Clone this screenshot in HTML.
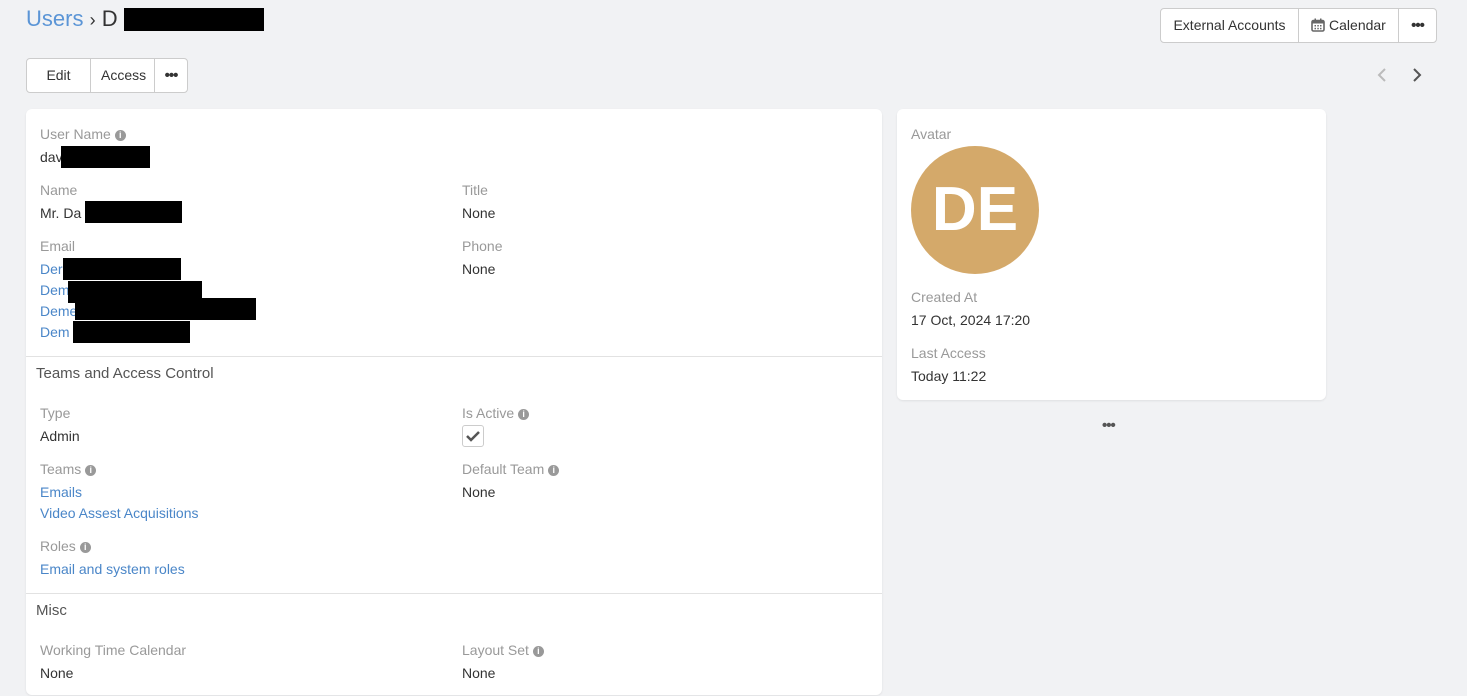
<!DOCTYPE html>
<html><head><style>
body{margin:0;width:1467px;height:696px;background:#f1f2f4;font-family:"Liberation Sans",sans-serif;font-size:14px;color:#333;position:relative;overflow:hidden}
.a{position:absolute;white-space:nowrap}
.l{color:#999}
.v{color:#333}
.k{color:#4a86c8}
.r{position:absolute;background:#000}
.i{display:inline-block;width:11px;height:11px;border-radius:50%;background:#999;color:#fff;font-size:9px;line-height:11px;text-align:center;font-weight:bold;vertical-align:1px;margin-left:4px}
.p{position:absolute;background:#fff;border-radius:6px;box-shadow:0 1px 2px rgba(0,0,0,.08)}
.bg{position:absolute;display:flex;border:1px solid #ccc;border-radius:4px;background:#fff;height:33px}
.bg div{border-right:1px solid #ccc;padding:0 10px;line-height:33px;color:#333;box-sizing:border-box;text-align:center}
.bg div:last-child{border-right:none}
.h{position:absolute;left:26px;width:856px;height:1px;background:#e2e2e2}
.d{font-size:15px;font-weight:bold;color:#555;letter-spacing:-1px}
</style></head><body>
<div class="a" style="left:26px;top:6px;font-size:22px"><span style="color:#5b95d6">Users</span> <span style="font-size:18px">›</span> D</div>
<div class="r" style="left:124px;top:8px;width:140px;height:23px"></div>
<div class="bg" style="left:1160px;top:8px"><div style="width:138px">External Accounts</div><div style="width:100px"><svg width="14" height="14" viewBox="0 0 14 14" style="vertical-align:-2px"><rect x="1" y="2.5" width="12" height="10.5" rx="1.5" fill="none" stroke="#666" stroke-width="1.6"/><rect x="1" y="2.5" width="12" height="3" fill="#666"/><rect x="3.5" y="0.5" width="1.5" height="3" fill="#666"/><rect x="9" y="0.5" width="1.5" height="3" fill="#666"/><g fill="#666"><rect x="3.5" y="7" width="1.5" height="1.5"/><rect x="6.3" y="7" width="1.5" height="1.5"/><rect x="9" y="7" width="1.5" height="1.5"/><rect x="3.5" y="9.8" width="1.5" height="1.5"/><rect x="6.3" y="9.8" width="1.5" height="1.5"/><rect x="9" y="9.8" width="1.5" height="1.5"/></g></svg> Calendar</div><div style="width:37px" class="d">•••</div></div>
<div class="bg" style="left:26px;top:58px"><div style="width:64px">Edit</div><div style="width:64px">Access</div><div style="width:32px;padding:0" class="d">•••</div></div>
<svg class="a" style="left:1377px;top:68px" width="10" height="14"><path d="M8 1L2 7l6 6" fill="none" stroke="#bbb" stroke-width="2"/></svg>
<svg class="a" style="left:1412px;top:68px" width="10" height="14"><path d="M2 1l6 6-6 6" fill="none" stroke="#555" stroke-width="2"/></svg>

<div class="p" style="left:26px;top:109px;width:856px;height:586px"></div>
<div class="h" style="top:356px"></div><div class="h" style="top:593px"></div>
<div class="a l" style="left:40px;top:126px">User Name<span class="i">i</span></div>
<div class="a v" style="left:40px;top:149px">dav</div><div class="r" style="left:61px;top:146px;width:89px;height:22px"></div>
<div class="a l" style="left:40px;top:182px">Name</div><div class="a v" style="left:40px;top:205px">Mr. Da</div><div class="r" style="left:85px;top:201px;width:97px;height:22px"></div>
<div class="a l" style="left:462px;top:182px">Title</div><div class="a v" style="left:462px;top:205px">None</div>
<div class="a l" style="left:40px;top:238px">Email</div>
<div class="a k" style="left:40px;top:261px">Der</div><div class="r" style="left:63px;top:258px;width:118px;height:22px"></div>
<div class="a k" style="left:40px;top:282px">Dem</div><div class="r" style="left:68px;top:281px;width:134px;height:22px"></div>
<div class="a k" style="left:40px;top:303px">Deme</div><div class="r" style="left:75px;top:298px;width:181px;height:22px"></div>
<div class="a k" style="left:40px;top:324px">Dem</div><div class="r" style="left:73px;top:321px;width:117px;height:22px"></div>
<div class="a l" style="left:462px;top:238px">Phone</div><div class="a v" style="left:462px;top:261px">None</div>
<div class="a" style="left:36px;top:365px;font-size:15px;color:#555">Teams and Access Control</div>
<div class="a l" style="left:40px;top:405px">Type</div><div class="a v" style="left:40px;top:428px">Admin</div>
<div class="a l" style="left:462px;top:405px">Is Active<span class="i">i</span></div>
<div class="a" style="left:462px;top:425px;width:20px;height:20px;border:1px solid #ccc;border-radius:3px;background:#fff"><svg width="20" height="20"><path d="M4 10l4 4 8-8" fill="none" stroke="#555" stroke-width="2.5"/></svg></div>
<div class="a l" style="left:40px;top:461px">Teams<span class="i">i</span></div>
<div class="a k" style="left:40px;top:484px">Emails</div><div class="a k" style="left:40px;top:505px">Video Assest Acquisitions</div>
<div class="a l" style="left:462px;top:461px">Default Team<span class="i">i</span></div><div class="a v" style="left:462px;top:484px">None</div>
<div class="a l" style="left:40px;top:538px">Roles<span class="i">i</span></div><div class="a k" style="left:40px;top:561px">Email and system roles</div>
<div class="a" style="left:36px;top:602px;font-size:15px;color:#555">Misc</div>
<div class="a l" style="left:40px;top:642px">Working Time Calendar</div><div class="a v" style="left:40px;top:665px">None</div>
<div class="a l" style="left:462px;top:642px">Layout Set<span class="i">i</span></div><div class="a v" style="left:462px;top:665px">None</div>

<div class="p" style="left:897px;top:109px;width:429px;height:291px"></div>
<div class="a l" style="left:911px;top:126px">Avatar</div>
<div class="a" style="left:911px;top:146px;width:128px;height:128px;border-radius:50%;background:#d4a96a;color:#fff;font-size:62px;font-weight:bold;line-height:128px;text-align:center">DE</div>
<div class="a l" style="left:911px;top:289px">Created At</div><div class="a v" style="left:911px;top:312px">17 Oct, 2024 17:20</div>
<div class="a l" style="left:911px;top:345px">Last Access</div><div class="a v" style="left:911px;top:368px">Today 11:22</div>
<div class="a d" style="left:1102px;top:417px">•••</div>
</body></html>
